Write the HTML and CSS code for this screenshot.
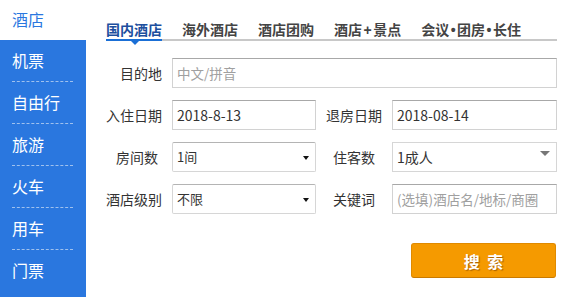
FILE: index.html
```html
<!DOCTYPE html>
<html lang="zh-CN">

<head>
    <meta charset="UTF-8">
    <title>酒店预订</title>
    <link rel="stylesheet" href="styles.css">
</head>

<body>
    <div class="wrap">
        <ul class="side">
            <li class="on">酒店</li>
            <li>机票</li>
            <li>自由行</li>
            <li>旅游</li>
            <li>火车</li>
            <li>用车</li>
            <li class="last">门票</li>
        </ul>
        <div class="main">
            <div class="tabs">
                <a href="#" class="cur">国内酒店</a>
                <a href="#">海外酒店</a>
                <a href="#">酒店团购</a>
                <a href="#">酒店<span class="sym">+</span>景点</a>
                <a href="#">会议<span class="sym">•</span>团房<span class="sym">•</span>长住</a>
            </div>
            <form class="form" action="#">
                <div class="row">
                    <label class="lab">目的地</label>
                    <input class="ipt wide" type="text" placeholder="中文/拼音">
                </div>
                <div class="row">
                    <label class="lab">入住日期</label>
                    <input class="ipt" type="text" value="2018-8-13">
                    <label class="lab2">退房日期</label>
                    <input class="ipt right" type="text" value="2018-08-14">
                </div>
                <div class="row">
                    <label class="lab pr">房间数</label>
                    <div class="sel">1间<i class="arr"></i></div>
                    <label class="lab2">住客数</label>
                    <div class="sel sel2 right">1成人<i class="arr2"></i></div>
                </div>
                <div class="row">
                    <label class="lab">酒店级别</label>
                    <div class="sel">不限<i class="arr"></i></div>
                    <label class="lab2">关键词</label>
                    <input class="ipt right" type="text" placeholder="(选填)酒店名/地标/商圈">
                </div>
                <div class="btnrow">
                    <button type="submit" class="btn">搜 索</button>
                </div>
            </form>
        </div>
    </div>
</body>

</html>
```

FILE: styles.css
```css
* {
    margin: 0;
    padding: 0;
    box-sizing: border-box;
}

html,
body {
    height: 100%;
    width: 100%;
}

body {
    font-family: "Noto Sans CJK SC", "Liberation Sans", sans-serif;
    color: #333;
    background: #fff;
}

.wrap {
    display: flex;
    height: 297px;
}

/* 左侧导航 */
.side {
    list-style: none;
    width: 86px;
    flex-shrink: 0;
    background: #2a77df;
}

.side li {
    height: 42px;
    line-height: 40px;
    padding-left: 12px;
    font-size: 16px;
    color: #fff;
    position: relative;
}

.side li::after {
    content: "";
    position: absolute;
    left: 12px;
    right: 13px;
    bottom: 0;
    border-bottom: 1px dashed #9fc1ee;
}

.side li.on {
    height: 40px;
    line-height: 38px;
    background: #fff;
    color: #2a77df;
}

.side li.on::after,
.side li.last::after {
    display: none;
}

/* 右侧 */
.main {
    flex: 1;
    padding: 20px 19px 0 20px;
}

.tabs {
    display: flex;
    gap: 20px;
    border-bottom: 2px solid #c8c8c8;
    height: 21px;
}

.tabs a {
    font-size: 14px;
    font-weight: bold;
    color: #444;
    text-decoration: none;
    line-height: 19px;
    height: 21px;
    white-space: nowrap;
    position: relative;
}

.tabs .sym {
    font-family: "Liberation Sans", sans-serif;
    padding: 0 1.5px;
}

.tabs a.cur {
    color: #1d4f9e;
    border-bottom: 2px solid #1a6fd6;
}

.tabs a.cur::after {
    content: "";
    position: absolute;
    left: 25px;
    bottom: -6px;
    border: 4px solid transparent;
    border-top-color: #1a6fd6;
    border-bottom: 0;
}

.form {
    padding-top: 17px;
}

.row {
    display: flex;
    align-items: center;
    height: 30px;
    margin-bottom: 12px;
    font-size: 14px;
}

.lab,
.lab2 {
    flex-shrink: 0;
    white-space: nowrap;
}

.lab {
    width: 56px;
    text-align: right;
    margin-right: 10px;
}

.lab.pr {
    padding-right: 4px;
}

.lab2 {
    width: 76px;
    text-align: center;
}

.ipt,
.sel {
    flex-shrink: 0;
    width: 144px;
    height: 30px;
    border: 1px solid #d2d2d2;
    border-top-color: #a8a8a8;
    padding: 0 4px;
    font-family: inherit;
    font-size: 14px;
    color: #333;
    outline: none;
}

.ipt::placeholder {
    color: #a0a0a0;
    font-size: 13.5px;
}

.ipt.wide {
    width: 385px;
}

.right {
    width: 165px;
}

.sel {
    position: relative;
    line-height: 28px;
    font-size: 13px;
    border-color: #d6d6d6;
    border-top-color: #b4b4b4;
    border-radius: 2px;
}

.arr {
    position: absolute;
    right: 6px;
    top: 13px;
    border: 3.5px solid transparent;
    border-top: 4px solid #111;
    border-bottom: 0;
}

.sel2 {
    font-size: 14px;
    border-top-color: #d6d6d6;
    border-radius: 0;
}

.arr2 {
    position: absolute;
    right: 6px;
    top: 8px;
    border: 5px solid transparent;
    border-top: 5px solid #777;
    border-bottom: 0;
}

.btnrow {
    display: flex;
    justify-content: flex-end;
    padding-top: 17px;
    padding-right: 1px;
}

.btn {
    width: 145px;
    height: 35px;
    background: #f59a00;
    border: 1px solid #e08a00;
    border-bottom-color: #c97a00;
    border-radius: 3px;
    color: #fff;
    font-family: inherit;
    font-size: 16px;
    font-weight: bold;
    letter-spacing: 2px;
    padding-left: 2px;
    text-shadow: 1px 1px 1px rgba(120, 60, 0, 0.6);
}
```
